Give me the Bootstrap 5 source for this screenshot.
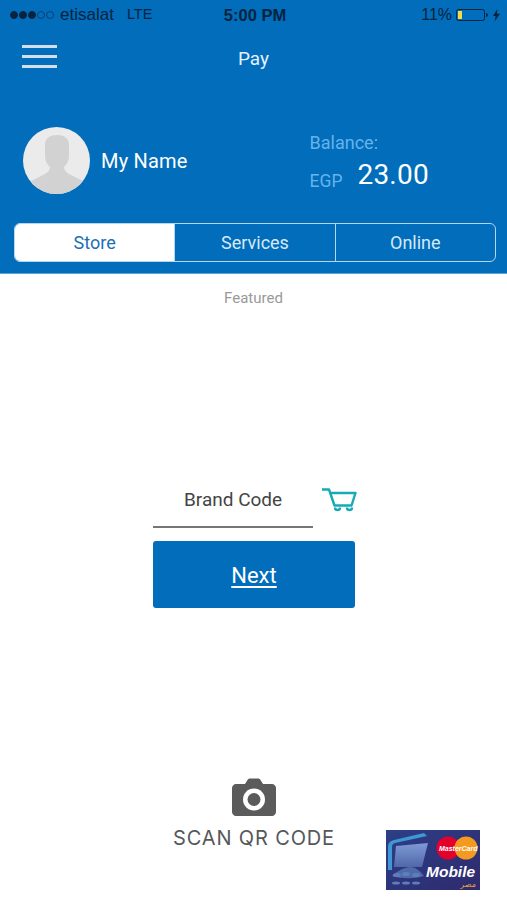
<!DOCTYPE html>
<html lang="en">
<head>
  <meta charset="UTF-8" />
  <meta name="viewport" content="width=device-width, initial-scale=1.0"/>
  <title>Pay</title>
  <link href="https://cdn.jsdelivr.net/npm/bootstrap@5.3.3/dist/css/bootstrap.min.css" rel="stylesheet">
  <style>
    html, body { height: 100%; margin: 0; background: #fff; }
    body { font-family: Roboto, sans-serif; width: 507px; height: 900px; overflow: hidden; }

    /* blue header */
    .pay-head { background: #016dbb; height: 274px; border-bottom: 1px solid #5aa5dc; color: #fff; }
    .status-bar { height: 30px; padding: 0 7px 0 10px; color: #04243f; font-family: "Liberation Sans", sans-serif; font-size: 15px; }
    .status-left, .status-right { flex: 1 1 0; }
    .status-time { font-weight: 700; font-size: 16.5px; }
    .status-carrier { font-size: 17px; margin-left: 5px; }
    .status-net { font-size: 14.5px; margin-left: 13px; }
    .status-pct { font-size: 16px; }
    .sig-dot { width: 8px; height: 8px; border-radius: 50%; background: #04243f; border: 1px solid #04243f; margin-right: 1px; }
    .sig-dot.is-off { background: transparent; border-color: #0c3f6b; }
    .nav-row { height: 58px; padding: 0 22px; }
    .burger { width: 35px; margin-bottom: 6px; }
    .burger span { display: block; height: 3px; background: #d3dee8; margin-bottom: 7px; }
    .burger span:last-child { margin-bottom: 0; }
    .pay-title { font-size: 19px; color: #e4f0fa; margin-right: 35px; }
    .profile-row { height: 107px; padding: 0 23px; margin-top: 19px; }
    .avatar { width: 67px; height: 67px; border-radius: 50%; overflow: hidden; flex: none; }
    .my-name { font-size: 20px; margin-left: 11px; letter-spacing: .2px; }
    .bal-box { margin: 3px 0 0 122px; color: #63b4ec; font-size: 18px; line-height: 1; }
    .bal-line { margin-top: 9px; }
    .bal-amount { color: #fff; font-size: 28px; margin-left: 15px; margin-bottom: 2px; letter-spacing: .2px; }
    .bal-cur { font-size: 17.5px; }

    /* Store / Services / Online */
    .seg-group { margin: 9px 11px 0 14px; height: 39px; border: 1px solid #b5d6ef; border-radius: 6px; overflow: hidden; }
    .seg-item { flex: 1 1 0; font-size: 18px; color: #d6e9f7; border: 0; border-left: 1px solid #b5d6ef; background: transparent; padding: 0; }
    .seg-item:first-child { border-left: 0; }
    .seg-item.is-on { background: #fff; color: #1a6fb5; }

    .featured { font-size: 15px; color: #9a9a9a; margin-top: 15px; line-height: 18px; }

    .code-wrap { width: 203px; margin: 175px 0 0 153px; }
    .code-line { width: 160px; height: 46px; padding-left: 31px; font-size: 19px; color: #444; border-bottom: 2px solid #767676; padding-bottom: 12px; flex: none; }
    .cart-icon { margin: -10px 0 0 9px; flex: none; }
    .next-btn { display: block; width: 202px; height: 67px; line-height: 69px; margin-top: 13px; padding: 0; border: 0; border-radius: 3px; background: #016dbb; color: #fff; font-size: 22px; text-decoration: underline; text-underline-offset: 3px; }
    .next-btn:hover { background: #016dbb; color: #fff; }

    .scan-row { margin-top: 170px; padding-left: 173px; }
    .scan-box { width: 162px; }
    .scan-text { font-family: Inter, sans-serif; font-size: 20px; letter-spacing: .85px; color: #55585b; white-space: nowrap; line-height: 24px; margin-top: 10px; }
    .logo-pic { margin: 52px 0 0 51px; flex: none; }
  </style>
</head>

<body>
<div class="pay-head">
  <!-- status bar -->
  <div class="status-bar d-flex align-items-center">
    <div class="status-left d-flex align-items-center">
      <span class="sig-dot"></span><span class="sig-dot"></span><span class="sig-dot"></span><span class="sig-dot is-off"></span><span class="sig-dot is-off"></span>
      <span class="status-carrier">etisalat</span>
      <span class="status-net">LTE</span>
    </div>
    <div class="status-time">5:00 PM</div>
    <div class="status-right d-flex align-items-center justify-content-end">
      <span class="status-pct">11%</span>
      <svg class="ms-1" width="33" height="14" viewBox="0 0 33 14">
        <rect x="0.5" y="1.5" width="28" height="11" rx="2" fill="none" stroke="#04243f" stroke-width="1"/>
        <rect x="2" y="3" width="4" height="8" fill="#f5dc3c"/>
        <path d="M30 5v4c1.2-.3 1.8-1 1.8-2s-.6-1.700-1.800-2z" fill="#04243f"/>
      </svg>
      <svg class="ms-1" width="7" height="14" viewBox="0 0 8 14"><path d="M5 0 0 8h3l-1 6 6-8.500H4.500z" fill="#04243f"/></svg>
    </div>
  </div>

  <!-- title row -->
  <div class="nav-row d-flex align-items-center">
    <div class="burger"><span></span><span></span><span></span></div>
    <div class="pay-title flex-grow-1 text-center">Pay</div>
  </div>

  <!-- profile + balance -->
  <div class="profile-row d-flex align-items-center">
    <div class="avatar">
      <svg width="67" height="67" viewBox="0 0 67 67">
        <rect width="67" height="67" fill="#ebebeb"/>
        <path d="M8 67V54l14-7c3-2 5-4 5-7-3-3-5-6-5-12V18c0-7 5-10 12-10s12 3 12 10v10c0 6-2 9-5 12 0 3 2 5 5 7l14 7v13z" fill="#d2d2d2"/>
      </svg>
    </div>
    <div class="my-name">My Name</div>
    <div class="bal-box">
      <div>Balance:</div>
      <div class="bal-line d-flex align-items-end"><span class="bal-cur">EGP</span><span class="bal-amount">23.00</span></div>
    </div>
  </div>

  <!-- segment tabs -->
  <div class="seg-group d-flex">
    <button type="button" class="seg-item is-on">Store</button>
    <button type="button" class="seg-item">Services</button>
    <button type="button" class="seg-item">Online</button>
  </div>
</div>

<div class="featured text-center">Featured</div>

<div class="code-wrap">
  <div class="d-flex align-items-center">
    <div class="code-line d-flex align-items-end">Brand Code</div>
    <svg class="cart-icon" width="35" height="24" viewBox="0 0 35 24" fill="none" stroke="#16aab5" stroke-width="2.4">
      <path d="M0 1.500h7l5.500 16h17l4-12.500H8" stroke-linejoin="round"/>
      <path d="M13 19.500a2.500 2.500 0 0 0 5 0M25 19.500a2.500 2.500 0 0 0 5 0"/>
    </svg>
  </div>
  <a href="#" class="next-btn btn">Next</a>
</div>

<div class="scan-row d-flex">
  <div class="scan-box text-center">
    <svg width="44" height="38" viewBox="0 0 44 38">
      <path d="M4 6h9l2.500-4c.5-1 1.500-1.500 2.500-1.500h8c1 0 2 .5 2.500 1.500L31 6h9c2 0 4 2 4 4v24c0 2-2 4-4 4H4c-2 0-4-2-4-4V10c0-2 2-4 4-4z" fill="#5b5b5b"/>
      <circle cx="22" cy="21.500" r="11" fill="#fff"/>
      <circle cx="22" cy="21.500" r="6.500" fill="#5b5b5b"/>
    </svg>
    <div class="scan-text">SCAN QR CODE</div>
  </div>
  <svg class="logo-pic" width="94" height="60" viewBox="0 0 94 60">
    <defs>
      <linearGradient id="logoBg" x1="0" y1="0" x2="1" y2="1"><stop offset="0" stop-color="#2c3f86"/><stop offset="1" stop-color="#2f2a6e"/></linearGradient>
      <linearGradient id="logoScreen" x1="0" y1="0" x2="0" y2="1"><stop offset="0" stop-color="#7f9ad6"/><stop offset="1" stop-color="#5067a8"/></linearGradient>
    </defs>
    <rect width="94" height="60" fill="url(#logoBg)"/>
    <!-- phone body -->
    <path d="M2 40V17c0-4 2-6 6-7l30-7 3 3-32 7c-2 .5-3 2-3 4v23z" fill="#3f97d6"/>
    <path d="M10 16l32-3-6 24H8z" fill="url(#logoScreen)"/>
    <!-- keypad -->
    <path d="M6 46c4-4 10-8 18-9 6 0 10 4 14 9-10 3-22 3-32 0z" fill="#4f6aa8"/>
    <g fill="#5f7dbb">
      <ellipse cx="11" cy="45" rx="4" ry="2"/><ellipse cx="20" cy="44" rx="4" ry="2"/><ellipse cx="30" cy="45" rx="4" ry="2"/>
      <ellipse cx="10" cy="53" rx="4" ry="1.5"/><ellipse cx="20" cy="53" rx="4" ry="1.5"/><ellipse cx="30" cy="53" rx="4" ry="1.5"/>
    </g>
    <!-- mastercard -->
    <circle cx="62" cy="18" r="11.5" fill="#e3002a"/>
    <circle cx="80" cy="18" r="11.5" fill="#f49a1f"/>
    <text x="53" y="21" fill="#fff" font-family="Liberation Sans, sans-serif" font-size="7" font-weight="700" font-style="italic">MasterCard</text>
    <text x="40" y="47" fill="#fff" font-family="Liberation Sans, sans-serif" font-size="15.5" font-weight="700" font-style="italic">Mobile</text>
    <text x="90" y="57" text-anchor="end" fill="#e9a23b" font-family="DejaVu Sans, sans-serif" font-size="8">مصر</text>
  </svg>
</div>

<script src="https://cdn.jsdelivr.net/npm/bootstrap@5.3.3/dist/js/bootstrap.bundle.min.js"></script>
</body>
</html>
